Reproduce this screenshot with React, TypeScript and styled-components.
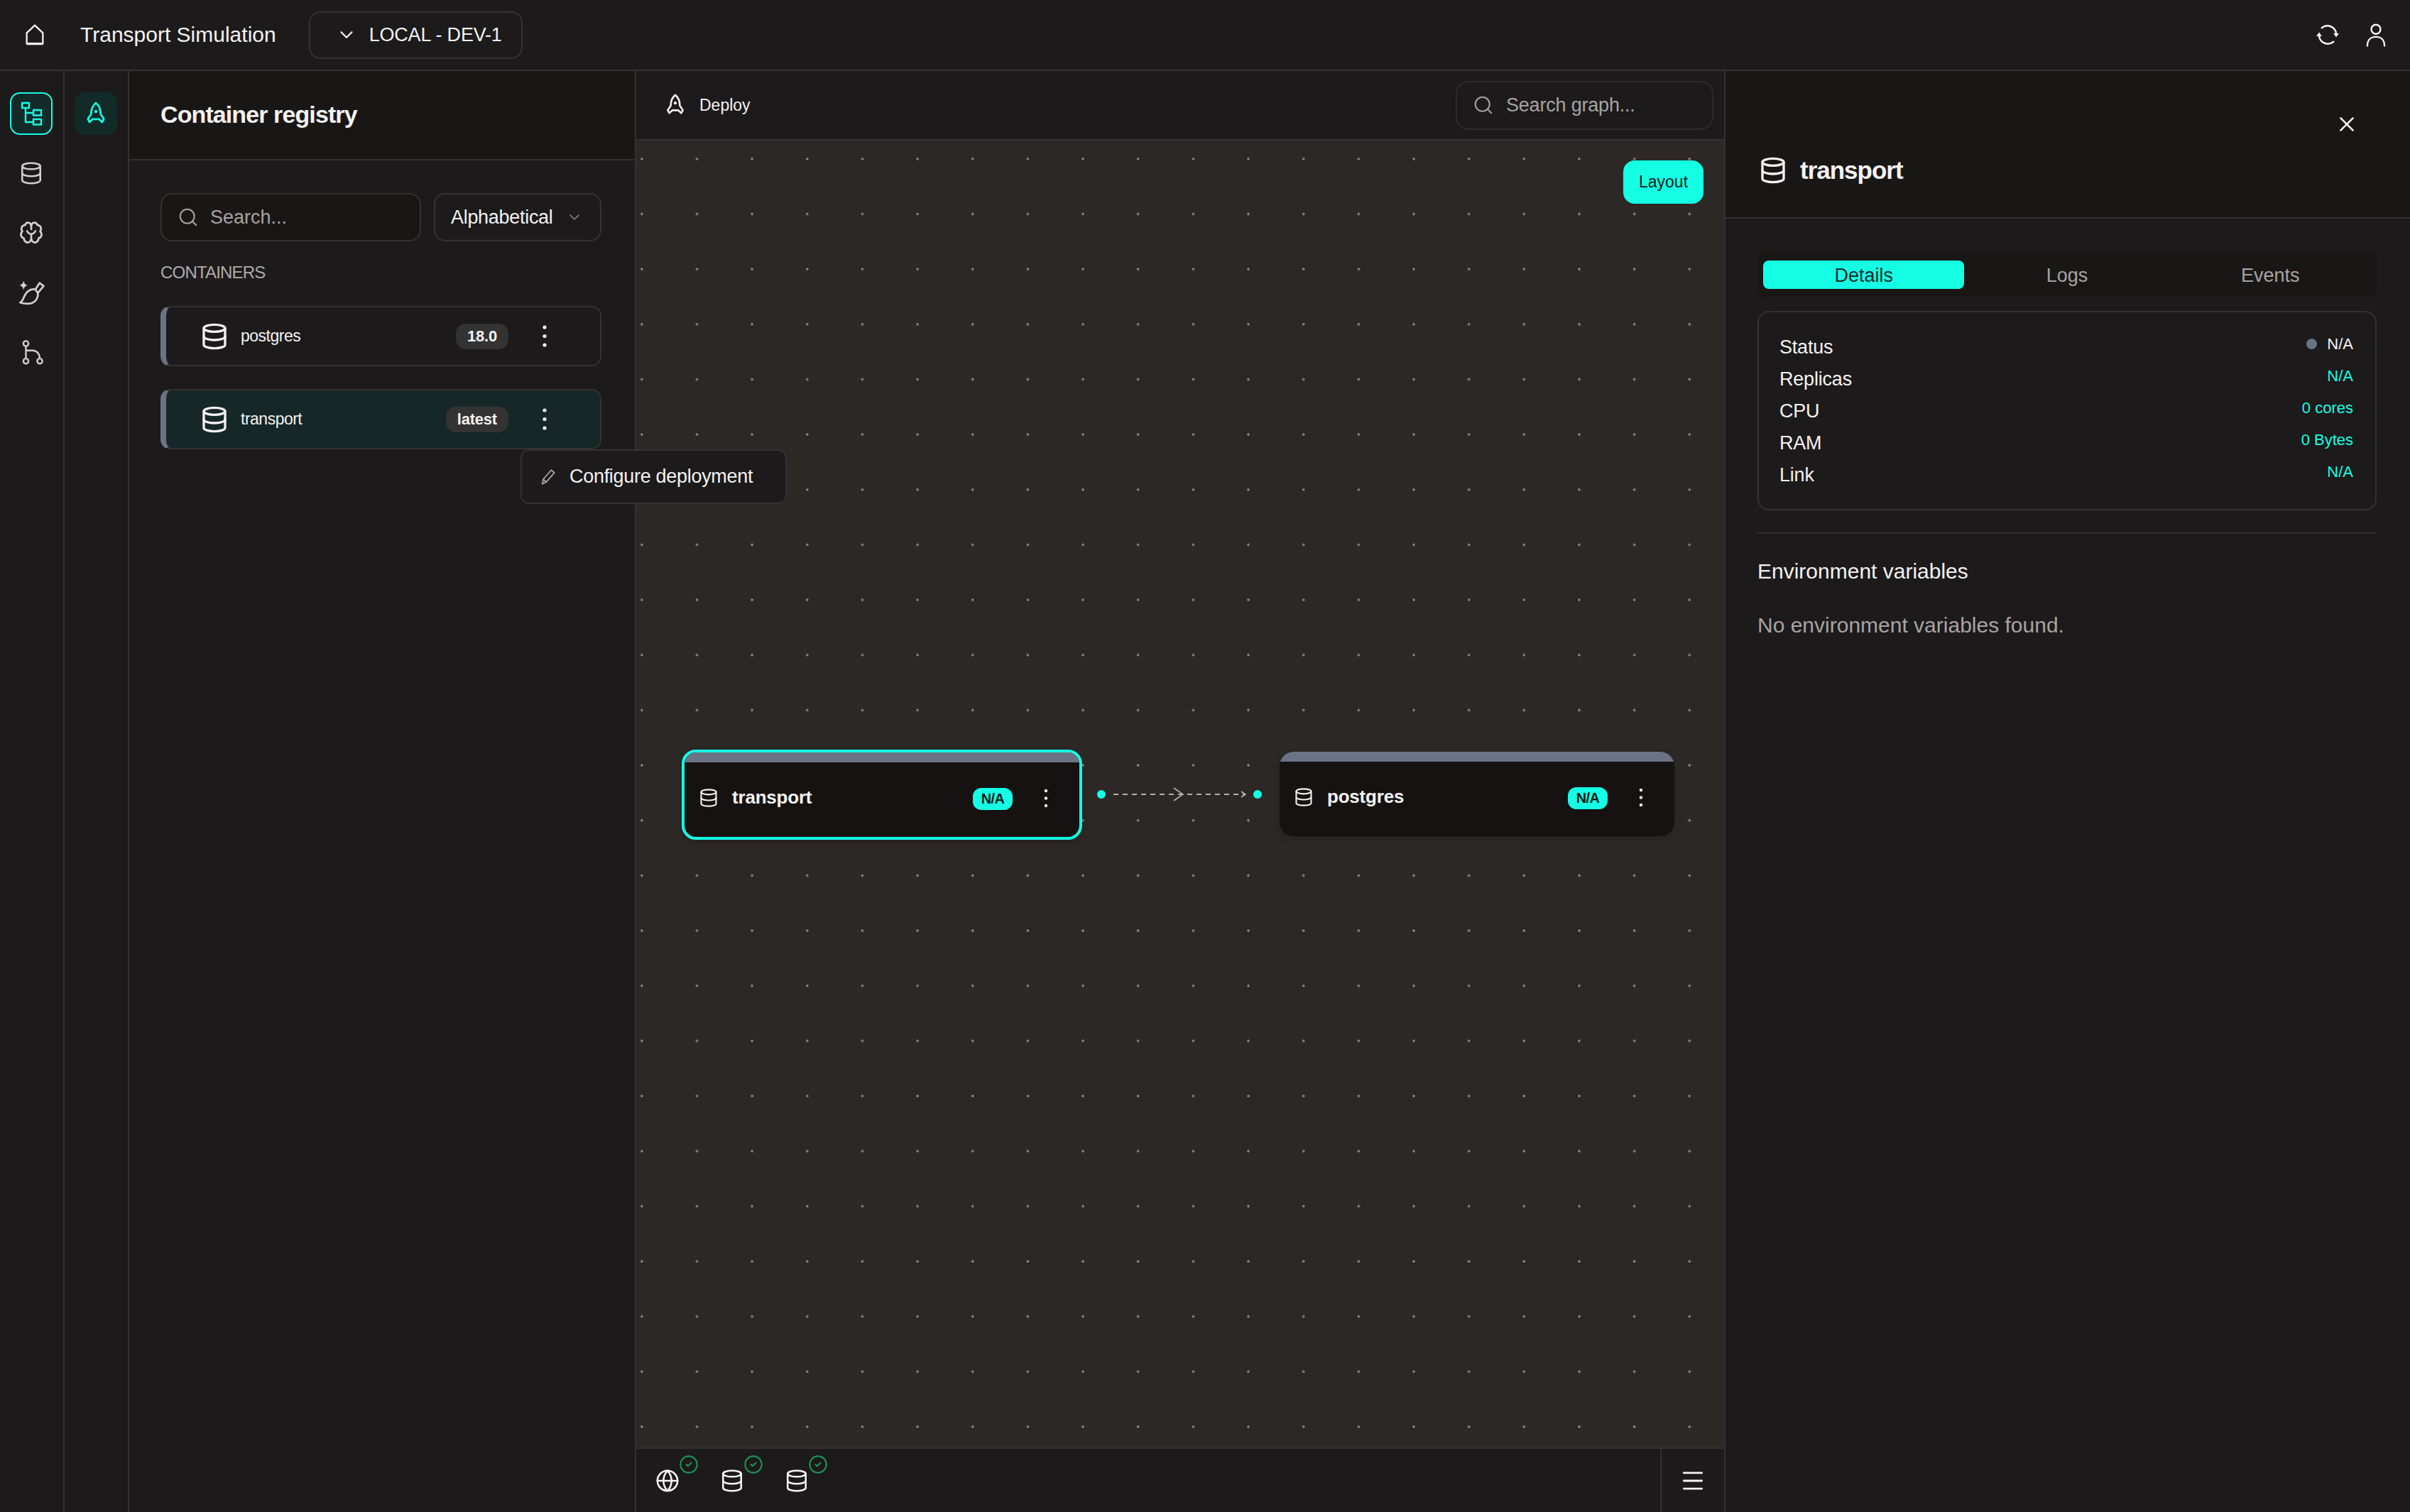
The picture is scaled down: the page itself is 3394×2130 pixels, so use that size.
import styled, { createGlobalStyle } from 'styled-components'
import { ChevronDown, CircleCheck, Database, Globe, Menu, Search, X } from 'lucide-react'

const TEAL = '#14ffe4'

const GlobalStyle = createGlobalStyle`
  html, body { margin: 0; padding: 0; background: #1c1a1b; }
  * { box-sizing: border-box; }
  body { font-family: "Liberation Sans", Arial, sans-serif; color: #f4f2f2; }
`

const HomeIcon = () => (
  <svg width="32" height="32" viewBox="0 0 24 24" fill="none" stroke="currentColor" strokeWidth="1.7" strokeLinejoin="round">
    <path d="M3.5 10 12 2l8.500 8v11.500h-17Z" />
    <path d="M3.500 21.500h17" strokeWidth="2.400" />
  </svg>
)

const SyncIcon = () => (
  <svg width="36" height="36" viewBox="0 0 24 24" fill="none" stroke="currentColor" strokeWidth="1.700" strokeLinecap="round">
    <path d="M20 11A8.200 8.200 0 0 0 6.500 5.500" />
    <path d="M4 13a8.200 8.200 0 0 0 13.500 5.500" />
    <path d="M17.400 10.600h5.200L20 14.400Z" fill="currentColor" stroke="none" />
    <path d="M1.400 13.400h5.200L4 9.600Z" fill="currentColor" stroke="none" />
  </svg>
)

const UserIcon = () => (
  <svg width="34" height="36" viewBox="0 0 24 24" fill="none" stroke="currentColor" strokeWidth="1.700" strokeLinecap="round">
    <circle cx="12" cy="6.500" r="4.600" />
    <path d="M3.500 23c0-6 3.500-9 8.500-9s8.500 3 8.500 9" />
  </svg>
)

const TreeIcon = () => (
  <svg width="32" height="34" viewBox="0 0 32 34" fill="none" stroke="currentColor" strokeWidth="2.400" strokeLinejoin="round">
    <rect x="3" y="2" width="10" height="7" />
    <rect x="19" y="12" width="11" height="7.500" />
    <rect x="19" y="25" width="11" height="7.500" />
    <path d="M8 9v20h11M8 16h11" />
  </svg>
)

const BrainIcon = () => (
  <svg width="40" height="40" viewBox="0 0 24 24" fill="none" stroke="currentColor" strokeWidth="1.600" strokeLinecap="round" strokeLinejoin="round">
    <path d="M12 6C11.500 2.800 7.500 2.300 6.800 5.500 4 5.500 2.800 8.500 4.500 10.800 2.500 12.500 3 16 5.800 16.500 5.800 19.500 9 21.300 11 19.300L12 17.500" />
    <path d="M12 6C12.500 2.800 16.500 2.300 17.200 5.500 20 5.500 21.200 8.500 19.500 10.800 21.500 12.500 21 16 18.200 16.500 18.200 19.500 15 21.300 13 19.300L12 17.500" />
    <path d="M12 6v3M8.500 10.500C9.500 12.500 11 13 12 13s2.500-.5 3.500-2.500M12 13v4.500" />
  </svg>
)

const BrushIcon = () => (
  <svg width="42" height="40" viewBox="0 0 24 24" fill="none" stroke="currentColor" strokeWidth="1.600" strokeLinejoin="round">
    <path d="M2.500 20.500c3.500-1 2.500-7 7.500-10 2-1.200 3.800-1.500 5.500-1l2 3c.8 4.300-2.500 9-8.500 9-2.200 0-4.500-.4-6.500-1Z" />
    <path d="m15.500 9.500 3.500-5.500 3.500 2.500-5 6" />
    <path d="M5.500 2Q6 5.500 9 6 6 6.500 5.500 10 5 6.500 2 6 5 5.500 5.500 2Z" fill="currentColor" stroke="none" />
  </svg>
)

const ForkIcon = () => (
  <svg width="36" height="36" viewBox="0 0 24 24" fill="none" stroke="currentColor" strokeWidth="1.600">
    <circle cx="7" cy="4" r="2.400" />
    <circle cx="7" cy="20.500" r="2.400" />
    <circle cx="20" cy="20.500" r="2.400" />
    <path d="M7 6.400v11.700M7 10.500h6.500c3.500 0 6.500 3 6.500 7.600" />
  </svg>
)

const RocketIcon = ({ size }: { size: number }) => (
  <svg width={size} height={size} viewBox="0 0 24 24" fill="none" stroke="currentColor" strokeWidth="1.800" strokeLinejoin="round">
    <path d="M12 2c3 2.500 4.500 6 4.500 10.500l3 4.500-1.600 3-2.900-2.800H9L6.100 20l-1.600-3 3-4.500C7.500 8 9 4.500 12 2Z" />
    <circle cx="12" cy="10" r="1.500" fill="currentColor" stroke="none" />
  </svg>
)

const PencilIcon = () => (
  <svg width="26" height="26" viewBox="0 0 24 24" fill="none" stroke="currentColor" strokeWidth="1.700" strokeLinejoin="round">
    <path d="M4.500 21 5.500 15 16 3l4 3.300L9.500 18.500Z" />
    <path d="m5.500 15 4 3.500" />
  </svg>
)

const Kebab = ({ gap, r }: { gap: number; r: number }) => (
  <svg width="8" height={gap * 2 + 8} viewBox={`0 0 8 ${gap * 2 + 8}`} fill="currentColor">
    <circle cx="4" cy="4" r={r} />
    <circle cx="4" cy={gap + 4} r={r} />
    <circle cx="4" cy={gap * 2 + 4} r={r} />
  </svg>
)

const EdgeLine = () => (
  <EdgeSvg width="240" height="40" viewBox="0 0 240 40" fill="none">
    <circle cx="11" cy="20" r="6" fill={TEAL} />
    <path d="M28 20H213" stroke="#b5b0ae" strokeWidth="1.800" strokeDasharray="7 6" />
    <path d="M113 11l13 9-13 9" stroke="#b5b0ae" strokeWidth="1.600" />
    <path d="M208 16l6 4-6 4" stroke="#b5b0ae" strokeWidth="1.600" />
    <circle cx="231" cy="20" r="6" fill={TEAL} />
  </EdgeSvg>
)

const containers = [
  { name: 'postgres', version: '18.0', active: false },
  { name: 'transport', version: 'latest', active: true },
]

const stats = [
  { label: 'Status', value: 'N/A', status: true },
  { label: 'Replicas', value: 'N/A', status: false },
  { label: 'CPU', value: '0 cores', status: false },
  { label: 'RAM', value: '0 Bytes', status: false },
  { label: 'Link', value: 'N/A', status: false },
]

const App = () => {
  return (
    <Page>
      <GlobalStyle />
      <TopBar>
        <TopIcon><HomeIcon /></TopIcon>
        <ProjectName>Transport Simulation</ProjectName>
        <EnvSelect>
          <ChevronDown size={30} strokeWidth={1.8} />
          <span>LOCAL - DEV-1</span>
        </EnvSelect>
        <TopActions>
          <TopIcon><SyncIcon /></TopIcon>
          <TopIcon><UserIcon /></TopIcon>
        </TopActions>
      </TopBar>

      <Body>
        <Rail>
          <RailItem $active $outlined><TreeIcon /></RailItem>
          <RailItem><Database size={34} strokeWidth={1.8} /></RailItem>
          <RailItem><BrainIcon /></RailItem>
          <RailItem><BrushIcon /></RailItem>
          <RailItem><ForkIcon /></RailItem>
        </Rail>

        <Rail>
          <RailItem $active><RocketIcon size={36} /></RailItem>
        </Rail>

        <Registry>
          <RegistryHeader>Container registry</RegistryHeader>
          <RegistryBody>
            <Filters>
              <SearchBox>
                <Search size={30} strokeWidth={1.6} />
                <span>Search...</span>
              </SearchBox>
              <SortSelect>
                <span>Alphabetical</span>
                <ChevronDown size={24} strokeWidth={1.6} />
              </SortSelect>
            </Filters>
            <SectionLabel>CONTAINERS</SectionLabel>
            <RowList>
              {containers.map((c) => (
                <ContainerRow key={c.name} $active={c.active}>
                  <Database size={40} strokeWidth={2} />
                  <RowName>{c.name}</RowName>
                  <VersionBadge>{c.version}</VersionBadge>
                  <RowMenu><Kebab gap={12.5} r={2.6} /></RowMenu>
                </ContainerRow>
              ))}
            </RowList>
          </RegistryBody>
          <Popover>
            <PopoverIcon><PencilIcon /></PopoverIcon>
            <span>Configure deployment</span>
          </Popover>
        </Registry>

        <Center>
          <CenterHeader>
            <DeployButton>
              <RocketIcon size={34} />
              <span>Deploy</span>
            </DeployButton>
            <GraphSearch>
              <Search size={30} strokeWidth={1.6} />
              <span>Search graph...</span>
            </GraphSearch>
          </CenterHeader>

          <Canvas>
            <LayoutButton>Layout</LayoutButton>
            <GraphNode $x={64} $y={858} $selected>
              <NodeStrip />
              <NodeRow>
                <Database size={28} strokeWidth={1.8} />
                <NodeName>transport</NodeName>
                <NodeBadge>N/A</NodeBadge>
                <NodeMenu><Kebab gap={10.5} r={2.2} /></NodeMenu>
              </NodeRow>
            </GraphNode>
            <EdgeLine />
            <GraphNode $x={906} $y={861}>
              <NodeStrip />
              <NodeRow>
                <Database size={28} strokeWidth={1.8} />
                <NodeName>postgres</NodeName>
                <NodeBadge>N/A</NodeBadge>
                <NodeMenu><Kebab gap={10.5} r={2.2} /></NodeMenu>
              </NodeRow>
            </GraphNode>
          </Canvas>

          <BottomBar>
            <ServiceList>
              <ServiceIcon>
                <Globe size={34} strokeWidth={1.8} />
                <ServiceCheck><CircleCheck size={28} strokeWidth={1.8} /></ServiceCheck>
              </ServiceIcon>
              <ServiceIcon>
                <Database size={34} strokeWidth={1.8} />
                <ServiceCheck><CircleCheck size={28} strokeWidth={1.8} /></ServiceCheck>
              </ServiceIcon>
              <ServiceIcon>
                <Database size={34} strokeWidth={1.8} />
                <ServiceCheck><CircleCheck size={28} strokeWidth={1.8} /></ServiceCheck>
              </ServiceIcon>
            </ServiceList>
            <MenuCell><Menu size={38} strokeWidth={1.8} /></MenuCell>
          </BottomBar>
        </Center>

        <Details>
          <DetailsHeader>
            <CloseButton><X size={34} strokeWidth={1.8} /></CloseButton>
            <DetailsTitle>
              <Database size={40} strokeWidth={2} />
              <span>transport</span>
            </DetailsTitle>
          </DetailsHeader>
          <DetailsBody>
            <Tabs>
              <Tab $active>Details</Tab>
              <Tab>Logs</Tab>
              <Tab>Events</Tab>
            </Tabs>
            <StatsCard>
              {stats.map((s) => (
                <StatRow key={s.label}>
                  <StatLabel>{s.label}</StatLabel>
                  <StatValue $status={s.status}>
                    {s.status && <StatusDot />}
                    {s.value}
                  </StatValue>
                </StatRow>
              ))}
            </StatsCard>
            <Divider />
            <EnvTitle>Environment variables</EnvTitle>
            <EnvEmpty>No environment variables found.</EnvEmpty>
          </DetailsBody>
        </Details>
      </Body>
    </Page>
  )
}

export default App

const Page = styled.div`
  width: 3394px;
  height: 2130px;
  display: flex;
  flex-direction: column;
  overflow: hidden;
  background: #1c1a1b;
`

const TopBar = styled.header`
  height: 100px;
  flex: none;
  display: flex;
  align-items: center;
  padding: 0 31px 0 33px;
  border-bottom: 2px solid #333131;
`

const TopIcon = styled.div`
  display: flex;
  color: #f6f4f4;
`

const ProjectName = styled.div`
  margin-left: 48px;
  font-size: 30px;
`

const EnvSelect = styled.div`
  margin-left: 46px;
  width: 301px;
  height: 67px;
  display: flex;
  align-items: center;
  gap: 17px;
  padding-left: 36px;
  border: 2px solid #333131;
  border-radius: 16px;
  font-size: 27px;
  letter-spacing: -0.2px;
`

const TopActions = styled.div`
  margin-left: auto;
  display: flex;
  align-items: center;
  gap: 33px;
`

const Body = styled.div`
  flex: 1;
  display: flex;
  min-height: 0;
`

const Rail = styled.nav`
  width: 91px;
  flex: none;
  display: flex;
  flex-direction: column;
  align-items: center;
  gap: 24px;
  padding: 30px 2px 0 0;
  border-right: 2px solid #333131;
`

const RailItem = styled.div<{ $active?: boolean; $outlined?: boolean }>`
  width: 60px;
  height: 60px;
  display: flex;
  align-items: center;
  justify-content: center;
  border-radius: 14px;
  color: ${(p) => (p.$active ? TEAL : '#d2cfcf')};
  background: ${(p) => (p.$active ? '#122a28' : 'transparent')};
  border: 2px solid ${(p) => (p.$outlined ? TEAL : 'transparent')};
`

const Registry = styled.aside`
  position: relative;
  z-index: 2;
  width: 714px;
  flex: none;
  display: flex;
  flex-direction: column;
  border-right: 2px solid #333131;
`

const RegistryHeader = styled.div`
  height: 126px;
  flex: none;
  display: flex;
  align-items: center;
  padding: 0 0 2px 44px;
  background: #191716;
  border-bottom: 2px solid #333131;
  font-size: 34px;
  font-weight: 700;
  letter-spacing: -0.9px;
`

const RegistryBody = styled.div`
  padding: 46px 47px 0 44px;
`

const Filters = styled.div`
  display: flex;
  gap: 18px;
`

const SearchBox = styled.div`
  width: 367px;
  height: 68px;
  display: flex;
  align-items: center;
  gap: 16px;
  padding-left: 22px;
  background: #191716;
  border: 2px solid #333131;
  border-radius: 16px;
  color: #a8a3a3;
  font-size: 27px;
`

const SortSelect = styled.div`
  flex: 1;
  height: 68px;
  display: flex;
  align-items: center;
  justify-content: space-between;
  padding: 0 24px 0 22px;
  border: 2px solid #333131;
  border-radius: 16px;
  font-size: 27px;
  letter-spacing: -0.3px;

  svg {
    color: #8a8686;
  }
`

const SectionLabel = styled.div`
  margin-top: 30px;
  line-height: 28px;
  font-size: 24px;
  letter-spacing: -0.8px;
  color: #b0abab;
`

const RowList = styled.div`
  margin-top: 33px;
  display: flex;
  flex-direction: column;
  gap: 32px;
`

const ContainerRow = styled.div<{ $active: boolean }>`
  height: 85px;
  display: flex;
  align-items: center;
  padding: 0 74px 0 48px;
  border: 2px solid #333131;
  border-left: 8px solid #6b7386;
  border-radius: 14px;
  background: ${(p) => (p.$active ? '#152726' : 'transparent')};
`

const RowName = styled.span`
  margin-left: 17px;
  font-size: 23px;
  letter-spacing: -0.5px;
`

const VersionBadge = styled.span`
  margin-left: auto;
  height: 36px;
  display: flex;
  align-items: center;
  padding: 0 16px;
  border-radius: 14px;
  background: #333333;
  font-size: 22px;
  font-weight: 700;
  letter-spacing: -0.2px;
`

const RowMenu = styled.span`
  margin-left: 47px;
  display: flex;
`

const Popover = styled.div`
  position: absolute;
  left: 551px;
  top: 533px;
  width: 375px;
  height: 77px;
  display: flex;
  align-items: center;
  gap: 17px;
  padding-left: 24px;
  background: #1c1a1b;
  border: 2px solid #333131;
  border-radius: 12px;
  font-size: 27px;
  letter-spacing: -0.3px;
`

const PopoverIcon = styled.span`
  display: flex;
  color: #a8a3a3;
`

const Center = styled.main`
  width: 1534px;
  flex: none;
  display: flex;
  flex-direction: column;
  border-right: 2px solid #333131;
`

const CenterHeader = styled.div`
  height: 98px;
  flex: none;
  display: flex;
  align-items: center;
  justify-content: space-between;
  padding: 0 15px 0 38px;
  border-bottom: 2px solid #333131;
`

const DeployButton = styled.div`
  display: flex;
  align-items: center;
  gap: 17px;
  font-size: 23px;
`

const GraphSearch = styled.div`
  width: 363px;
  height: 69px;
  display: flex;
  align-items: center;
  gap: 17px;
  padding-left: 22px;
  border: 2px solid #2c2a2a;
  border-radius: 18px;
  color: #a8a3a3;
  font-size: 27px;
  letter-spacing: -0.2px;
`

const Canvas = styled.div`
  position: relative;
  flex: 1;
  background-color: #2c2826;
  background-image: radial-gradient(circle, #8c8987 1.4px, transparent 2px);
  background-size: 77.67px 77.67px;
  background-position: -31px -13px;
`

const LayoutButton = styled.div`
  position: absolute;
  top: 28px;
  right: 29px;
  width: 113px;
  height: 61px;
  display: flex;
  align-items: center;
  justify-content: center;
  border-radius: 16px;
  background: ${TEAL};
  color: #0a1a18;
  font-size: 23px;
`

const GraphNode = styled.div<{ $x: number; $y: number; $selected?: boolean }>`
  position: absolute;
  left: ${(p) => p.$x}px;
  top: ${(p) => p.$y}px;
  width: ${(p) => (p.$selected ? 564 : 556)}px;
  height: ${(p) => (p.$selected ? 127 : 119)}px;
  display: flex;
  flex-direction: column;
  overflow: hidden;
  border: ${(p) => (p.$selected ? `4px solid ${TEAL}` : 'none')};
  border-radius: 20px;
  background: #161211;
  box-shadow: 0 4px 10px rgba(0, 0, 0, 0.15);
`

const NodeStrip = styled.div`
  height: 14px;
  flex: none;
  background: #6b7386;
`

const NodeRow = styled.div`
  flex: 1;
  display: flex;
  align-items: center;
  padding: 0 43px 5px 20px;
`

const NodeName = styled.span`
  margin-left: 19px;
  margin-top: -2px;
  font-size: 26px;
  font-weight: 700;
  letter-spacing: -0.2px;
`

const NodeBadge = styled.span`
  margin-left: auto;
  margin-top: 3px;
  width: 56px;
  height: 31px;
  display: flex;
  align-items: center;
  justify-content: center;
  border-radius: 12px;
  background: ${TEAL};
  color: #0a1a18;
  font-size: 20px;
  font-weight: 700;
  letter-spacing: -0.6px;
`

const NodeMenu = styled.span`
  margin-left: 43px;
  display: flex;
`

const EdgeSvg = styled.svg`
  position: absolute;
  left: 644px;
  top: 901px;
`

const BottomBar = styled.div`
  height: 91px;
  flex: none;
  display: flex;
  align-items: center;
  justify-content: space-between;
  border-top: 2px solid #333131;
`

const ServiceList = styled.div`
  display: flex;
  padding-left: 27px;
`

const ServiceIcon = styled.div`
  position: relative;
  width: 91px;
  display: flex;
  color: #f6f4f4;
`

const ServiceCheck = styled.span`
  position: absolute;
  left: 33px;
  top: -20px;
  display: flex;
  color: #1f9453;
`

const MenuCell = styled.div`
  width: 90px;
  height: 100%;
  display: flex;
  align-items: center;
  justify-content: center;
  border-left: 2px solid #333131;
  color: #f6f4f4;
`

const Details = styled.aside`
  flex: 1;
  display: flex;
  flex-direction: column;
`

const DetailsHeader = styled.div`
  height: 208px;
  flex: none;
  display: flex;
  flex-direction: column;
  padding: 58px 72px 0 47px;
  background: #191716;
  border-bottom: 2px solid #333131;
`

const CloseButton = styled.div`
  align-self: flex-end;
  display: flex;
`

const DetailsTitle = styled.div`
  margin-top: 28px;
  height: 40px;
  display: flex;
  align-items: center;
  gap: 18px;
  font-size: 35px;
  font-weight: 700;
  letter-spacing: -1px;
`

const DetailsBody = styled.div`
  padding: 47px 47px 0 45px;
`

const Tabs = styled.div`
  height: 64px;
  display: flex;
  gap: 3px;
  padding: 12px 8px;
  border-radius: 10px;
  background: #191716;
`

const Tab = styled.div<{ $active?: boolean }>`
  flex: 1;
  display: flex;
  align-items: center;
  justify-content: center;
  padding-top: 2px;
  border-radius: 8px;
  background: ${(p) => (p.$active ? TEAL : 'transparent')};
  color: ${(p) => (p.$active ? '#0e2a2c' : '#a8a3a3')};
  font-size: 27px;
`

const StatsCard = styled.div`
  margin-top: 19px;
  height: 281px;
  padding: 27px 31px 0 29px;
  border: 2px solid #333131;
  border-radius: 16px;
`

const StatRow = styled.div`
  height: 45px;
  display: flex;
  justify-content: space-between;
`

const StatLabel = styled.span`
  line-height: 45px;
  font-size: 27px;
  letter-spacing: -0.2px;
`

const StatValue = styled.span<{ $status: boolean }>`
  display: flex;
  align-items: center;
  height: 35px;
  font-size: 22px;
  color: ${(p) => (p.$status ? '#f4f2f2' : TEAL)};
`

const StatusDot = styled.span`
  width: 15px;
  height: 15px;
  margin-right: 14px;
  border-radius: 50%;
  background: #6b7386;
`

const Divider = styled.div`
  margin-top: 31px;
  height: 2px;
  background: #302e2e;
`

const EnvTitle = styled.div`
  margin-top: 33px;
  line-height: 40px;
  font-size: 30px;
`

const EnvEmpty = styled.div`
  margin-top: 36px;
  line-height: 40px;
  font-size: 30px;
  color: #a8a3a3;
`
